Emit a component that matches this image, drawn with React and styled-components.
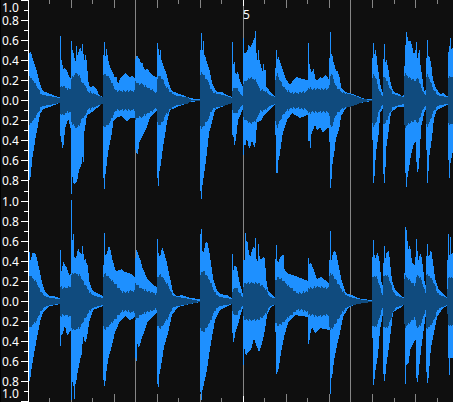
import React from "react";
import styled, { createGlobalStyle } from "styled-components";

const GlobalStyle = createGlobalStyle`
  body {
    margin: 0;
    background: #0f0f0f;
    overflow: hidden;
  }
`;

const Editor = styled.main`
  display: grid;
  grid-template-columns: 21px 8px minmax(0, 1fr);
  background: #0f0f0f;
  color: #ffffff;
  font-family: "Noto Sans", "Open Sans", sans-serif;
  font-size: 12px;
  line-height: 12px;
`;

const Scale = styled.div`
  display: flex;
  flex-direction: column;
  border-left: 1px solid #000000;
`;

const ScaleLabel = styled.span`
  display: flex;
  box-sizing: border-box;
  align-items: ${(p) => p.$align || "center"};
  height: ${(p) => p.$height || 20}px;
  padding: ${(p) => p.$inset || "0"};
  padding-left: 1px;
`;

const ScaleTicks = styled.svg`
  display: block;
  width: 8px;
  height: 402px;
  fill: #ffffff;
  shape-rendering: crispEdges;
`;

const Timeline = styled.section`
  position: relative;
`;

const Plot = styled.svg`
  display: block;
  width: 100%;
  height: 402px;
  shape-rendering: crispEdges;
`;

const BarNumber = styled.span`
  position: absolute;
  top: 9px;
`;

const ORIGIN = 29;
const SPAN = 424;
const HEIGHT = 402;
const STEPS = ["0.8", "0.6", "0.4", "0.2", "0.0", "0.2", "0.4", "0.6", "0.8"];
const MAJOR = [0, 20, 40, 60, 80, 100, 120, 140, 160, 180, 201, 221, 241, 261, 281, 301, 321, 341, 361, 381, 401];
const MINOR = [10, 30, 50, 70, 90, 110, 130, 150, 170, 191, 211, 231, 251, 271, 291, 311, 331, 351, 371, 391];
const BARS = [135, 243, 350];
const BEATS = [71, 114, 157, 200, 286, 329, 372, 415];
const HALF_BEATS = [49, 92, 178, 221, 264, 307, 394, 437];
const BAR_FIVE = 243;

// Envelopes are "x,y" breakpoints; the core is symmetric about the channel's axis.
const CHANNELS = [
  {
    name: "Left channel",
    mirror: 201,
    upper:
      "29,54 30,51 32,55 33,60 36,68 38,76 41,87 43,91 48,93 53,95 59,97 60,97 60,36 61,36 61,59 62,61 63,69 65,68 67,71 69,76 71,78 71,41 72,41 72,49 73,50 74,55 75,61 76,61 76,46 77,46 77,57 79,50 80,47 82,52 82,44 83,44 84,64 85,55 86,55 87,65 88,77 89,86 92,87 93,85 95,88 97,89 98,93 101,96 103,97 103,55 104,55 104,42 105,42 105,56 106,56 106,48 107,50 108,59 110,67 113,73 115,78 116,75 117,79 118,84 120,78 123,76 125,73 127,74 129,77 132,76 135,78 135,60 136,57 137,54 138,57 140,59 141,64 142,61 143,65 144,69 146,70 147,68 149,71 152,75 156,77 157,77 157,43 158,43 158,49 159,49 159,55 160,55 160,50 161,50 161,58 163,65 166,72 168,80 170,87 172,91 177,93 183,95 190,98 197,99 200,99 200,50 201,50 201,33 202,33 202,50 203,50 203,41 204,41 204,54 205,55 207,63 209,68 211,77 212,83 215,89 218,92 222,92 227,95 232,97 232,42 233,42 233,64 234,64 234,62 235,62 235,72 237,74 238,70 239,77 241,83 243,87 243,38 244,38 244,53 247,52 249,43 250,48 252,44 254,38 255,38 255,31 256,31 256,45 257,60 258,60 258,50 259,50 260,70 260,64 261,64 262,72 263,70 263,64 264,64 264,70 266,70 266,86 269,90 272,93 275,96 275,68 276,68 276,50 277,50 277,63 278,55 280,62 282,67 284,73 286,79 288,82 290,85 293,80 295,78 297,77 300,78 303,79 308,80 308,43 309,43 309,60 310,68 312,73 313,69 314,69 315,78 317,80 320,77 322,78 325,75 327,76 329,80 329,58 330,58 330,32 331,32 331,55 332,53 333,58 334,65 335,64 336,73 337,69 340,78 341,87 345,92 353,94 360,97 365,99 372,99 372,58 373,58 373,43 374,43 374,57 375,50 376,50 377,62 380,82 381,87 383,94 383,59 384,59 384,44 385,44 385,66 386,57 388,67 390,80 393,91 396,93 400,94 402,96 404,95 404,66 405,66 405,45 406,45 406,32 407,32 407,35 409,43 410,39 412,46 414,55 415,50 416,50 416,42 417,42 417,60 419,50 420,50 420,62 422,75 423,83 424,91 426,90 426,58 427,58 427,40 428,40 428,57 429,55 431,63 433,80 436,88 440,94 443,93 447,96 448,96 448,58 449,46 450,46 450,38 451,38 451,49 453,47",
    core:
      "29,73 30,77 35,83 39,90 42,95 50,96 59,98 60,98 60,87 63,86 68,89 71,88 71,80 73,76 77,73 80,76 82,83 85,84 87,91 93,93 97,95 102,97 103,97 103,74 107,75 110,79 113,85 116,91 135,91 135,80 138,84 142,84 147,87 152,90 157,93 157,82 158,75 163,79 165,85 168,88 171,93 177,96 187,97 192,100 200,100 200,80 201,71 205,77 209,83 211,89 215,93 227,96 232,98 232,90 235,87 238,89 241,95 243,96 243,83 247,80 250,78 255,79 258,84 260,90 266,91 270,95 275,97 275,82 277,73 280,80 283,86 288,91 292,93 307,92 308,88 315,89 329,89 330,80 331,71 333,77 336,86 341,92 353,95 363,99 372,100 372,85 373,73 376,78 379,90 382,96 383,96 383,80 384,76 386,79 390,88 393,94 404,97 404,78 405,73 410,78 416,81 418,77 421,87 425,95 426,95 426,80 427,74 430,80 433,88 437,95 447,97 448,97 448,78 453,76",
    lower:
      "29,180 30,180 31,173 32,160 34,148 36,135 38,125 40,114 43,109 50,107 59,103 60,103 60,136 61,136 62,148 63,148 64,142 65,128 67,123 68,118 71,130 71,194 72,194 72,172 73,182 74,184 77,182 79,170 82,163 83,150 83,162 84,162 84,133 85,128 87,115 92,112 97,108 103,102 103,178 104,178 104,189 105,189 105,178 106,170 108,152 110,142 112,133 113,122 117,117 122,116 127,121 130,118 135,118 135,148 137,154 138,154 139,143 143,135 147,127 150,117 157,110 157,178 158,178 158,186 159,186 159,173 161,163 163,147 165,135 167,122 170,110 177,107 190,102 200,101 200,191 201,191 201,199 202,199 202,188 204,175 207,152 209,133 212,122 215,110 228,104 232,102 232,134 234,138 234,145 235,145 237,130 238,120 243,109 243,155 244,155 244,142 245,147 247,138 249,148 250,148 252,140 254,147 255,147 256,138 257,122 261,121 263,117 270,109 275,105 275,135 276,135 276,173 278,173 278,160 279,160 281,145 283,132 287,120 292,113 297,116 300,118 307,115 308,115 308,141 310,141 310,148 311,148 311,135 315,125 317,130 320,127 323,133 327,128 329,128 329,142 330,142 330,188 331,188 332,170 333,158 334,155 336,138 339,130 341,116 346,108 353,105 365,102 372,101 372,140 373,140 373,183 374,183 375,168 376,152 379,132 380,113 383,108 383,174 384,174 384,183 385,183 386,150 389,128 391,112 398,107 404,107 404,118 405,118 405,173 406,173 406,187 407,187 407,180 409,168 411,155 414,143 416,142 416,162 417,162 417,172 418,172 419,165 420,150 421,127 425,110 426,110 426,150 427,150 427,183 428,183 429,158 432,138 434,118 437,110 447,105 448,105 448,160 449,160 449,178 450,178 450,165 453,150",
  },
  {
    name: "Right channel",
    mirror: 603,
    upper:
      "29,252 30,252 30,260 31,259 33,251 34,254 35,252 37,259 39,268 42,282 45,292 50,296 54,296 59,298 60,298 60,250 61,250 61,271 62,271 63,261 65,265 67,268 69,275 71,274 71,200 72,200 72,240 73,240 73,234 74,234 74,256 76,258 78,248 80,253 82,254 82,246 83,246 84,262 85,257 87,265 88,265 89,280 92,289 95,292 103,296 103,265 104,265 104,233 105,233 105,255 107,254 108,247 110,247 112,258 114,265 116,271 122,269 125,272 132,274 135,278 135,258 136,258 136,249 137,250 140,259 141,260 142,267 144,271 147,278 152,284 157,287 157,239 158,239 158,250 159,256 161,254 162,246 164,252 167,263 170,278 173,292 177,296 182,295 190,298 200,299 200,234 201,234 201,229 202,229 202,250 204,252 205,243 207,241 209,250 211,263 213,278 217,290 220,294 227,295 232,298 232,254 233,254 233,273 234,267 235,265 237,268 239,280 243,295 243,260 245,260 245,233 246,233 246,245 247,237 248,247 250,258 252,250 254,246 255,250 255,238 256,238 256,258 258,262 258,244 259,244 259,255 261,260 263,257 265,258 266,278 268,290 272,295 275,297 275,259 276,259 276,245 277,245 277,258 278,263 280,258 282,255 284,255 284,268 287,273 293,275 298,277 308,281 308,258 309,258 309,264 311,263 313,268 317,279 321,277 325,280 329,283 329,260 330,260 330,231 331,231 331,262 333,253 335,250 337,257 339,268 342,282 346,293 352,295 358,298 363,299 372,300 372,257 373,257 373,240 374,240 374,250 375,260 377,253 378,253 380,263 381,280 383,287 383,263 384,263 384,246 385,246 385,262 386,253 389,250 390,263 392,280 395,290 398,292 402,297 404,297 404,273 405,273 405,226 406,227 407,232 408,250 410,244 412,262 415,265 415,257 416,257 416,238 417,240 418,262 419,257 421,253 423,267 425,285 426,285 426,256 427,256 427,243 428,244 428,257 430,254 431,248 433,262 435,278 438,288 442,293 447,297 447,260 448,260 448,234 449,234 449,255 450,255 450,237 451,237 451,255 453,252",
    core:
      "29,275 33,278 37,283 39,288 43,295 50,298 60,299 60,287 65,288 71,286 71,275 73,273 77,274 80,275 83,281 87,288 92,295 103,298 103,277 105,273 110,278 117,286 123,292 135,291 135,282 140,288 150,292 157,294 157,277 160,274 163,278 168,285 173,296 190,299 200,301 200,278 201,273 203,270 207,276 211,283 215,293 220,297 232,299 232,292 235,287 237,288 242,297 243,297 243,287 245,283 258,283 263,286 266,289 270,297 275,298 275,280 278,277 283,280 290,287 297,293 308,292 308,288 320,287 329,288 329,279 330,272 333,275 337,282 342,290 347,296 358,299 372,301 372,278 375,275 377,277 380,287 383,296 383,278 386,274 389,278 392,288 395,295 404,298 404,282 405,276 407,277 410,280 415,285 417,275 421,278 425,292 426,292 426,275 430,276 434,283 438,294 447,298 448,278 453,277",
    lower:
      "29,381 30,381 31,372 33,360 34,353 36,343 38,332 40,322 43,312 50,306 60,304 60,346 61,346 61,336 63,333 65,325 67,336 70,331 71,331 71,400 72,400 72,382 73,382 74,390 74,399 75,399 75,385 76,383 78,370 80,360 82,353 83,335 85,343 87,337 89,323 93,310 103,306 103,380 104,380 104,386 105,386 106,375 108,360 112,345 115,332 120,321 125,316 130,320 135,317 135,358 136,358 136,361 137,361 137,343 139,348 142,337 145,330 147,323 152,317 157,312 157,384 158,384 158,387 159,387 159,377 162,360 164,347 168,333 172,315 178,307 190,304 200,302 200,392 201,392 201,400 202,400 202,391 203,388 207,370 209,355 212,337 215,320 220,310 232,304 232,333 233,333 233,342 234,342 235,333 237,328 240,317 243,307 243,365 244,365 244,346 246,356 248,352 251,350 254,338 257,347 259,352 262,343 265,330 267,315 271,307 275,305 275,332 276,332 276,374 277,374 279,367 281,352 284,337 288,323 295,315 308,317 308,344 309,344 310,335 312,327 315,333 320,328 329,330 330,330 330,394 331,394 331,378 332,378 334,360 337,345 340,333 343,317 348,308 358,303 372,302 372,338 373,338 373,385 374,385 375,373 378,355 380,330 383,313 383,374 384,374 384,382 385,380 386,367 389,347 391,330 393,312 400,308 404,305 405,305 405,384 406,384 406,365 409,362 410,350 415,340 416,340 416,378 417,378 417,382 418,382 419,368 421,350 424,327 426,313 426,372 427,372 427,383 428,383 429,372 431,347 435,328 437,317 443,308 447,306 448,306 448,358 449,358 449,375 450,375 450,358 453,358",
  },
];

const RIPPLE = [0, 1, -1, 0, 1, 0, -1, 1, 0, -1, 0];

const parse = (text) => text.split(" ").map((pair) => pair.split(",").map(Number));

function outline(top, bottom) {
  return [...top, ...[...bottom].reverse()].map((p) => p.join(",")).join(" ");
}

// Samples an envelope at every column and returns its stepped edge.
function stepped(points, rippleAxis) {
  const edge = [];
  for (let x = ORIGIN; x < ORIGIN + SPAN; x += 1) {
    const mid = x + 0.5;
    const i = points.findIndex(([px], n) => n > 0 && px > mid);
    const [x0, y0] = points[i - 1];
    const [x1, y1] = points[i];
    let y = Math.round(y0 + ((y1 - y0) * (mid - x0)) / (x1 - x0));
    if (rippleAxis && Math.abs(y - rippleAxis) > 7) {
      y += RIPPLE[x % RIPPLE.length];
    }
    edge.push([x, y], [x + 1, y]);
  }
  return edge;
}

function Channel({ channel }) {
  const core = stepped(parse(channel.core), channel.mirror / 2);
  const reflected = core.map(([x, y]) => [x, channel.mirror - y]);
  return (
    <g aria-label={channel.name}>
      <polygon
        fill="#1e90ff"
        points={outline(stepped(parse(channel.upper)), stepped(parse(channel.lower)))}
      />
      <polygon fill="#104b7e" points={outline(core, reflected)} />
    </g>
  );
}

function AmplitudeScale() {
  return (
    <Scale>
      <ScaleLabel $height={11} $align="flex-start" $inset="2px 0 0">1.0</ScaleLabel>
      {STEPS.map((value, i) => (
        <ScaleLabel key={i}>{value}</ScaleLabel>
      ))}
      <ScaleLabel $height={21}>1.0</ScaleLabel>
      {STEPS.map((value, i) => (
        <ScaleLabel key={i}>{value}</ScaleLabel>
      ))}
      <ScaleLabel $height={10} $align="flex-end" $inset="0 0 2px">1.0</ScaleLabel>
    </Scale>
  );
}

function TimeGrid() {
  return (
    <g fill="#868686">
      {BARS.map((x) => (
        <rect key={x} x={x} y="0" width="1" height={HEIGHT} />
      ))}
      {BEATS.map((x) => (
        <React.Fragment key={x}>
          <rect x={x} y="0" width="1" height="8" />
          <rect x={x} y={HEIGHT - 8} width="1" height="8" />
        </React.Fragment>
      ))}
      {HALF_BEATS.map((x) => (
        <React.Fragment key={x}>
          <rect x={x} y="0" width="1" height="4" />
          <rect x={x} y={HEIGHT - 4} width="1" height="4" />
        </React.Fragment>
      ))}
      <rect x={BAR_FIVE} y="0" width="1" height="6" fill="#ffffff" />
      <rect x={BAR_FIVE} y={HEIGHT - 6} width="1" height="6" fill="#ffffff" />
    </g>
  );
}

export default function App() {
  return (
    <>
      <GlobalStyle />
      <Editor>
        <AmplitudeScale />
        <ScaleTicks viewBox="0 0 8 402" aria-hidden="true">
          <rect x="7" y="0" width="1" height={HEIGHT} />
          {MAJOR.map((y) => (
            <rect key={y} x="0" y={y} width="8" height="1" />
          ))}
          {MINOR.map((y) => (
            <rect key={y} x="3" y={y} width="5" height="1" />
          ))}
        </ScaleTicks>
        <Timeline>
          <Plot
            viewBox={`${ORIGIN} 0 ${SPAN} ${HEIGHT}`}
            preserveAspectRatio="none"
            role="img"
            aria-label="Stereo waveform"
          >
            <TimeGrid />
            {CHANNELS.map((channel) => (
              <Channel key={channel.name} channel={channel} />
            ))}
          </Plot>
          <BarNumber style={{ left: `${((BAR_FIVE - ORIGIN) / SPAN) * 100}%` }}>5</BarNumber>
        </Timeline>
      </Editor>
    </>
  );
}
